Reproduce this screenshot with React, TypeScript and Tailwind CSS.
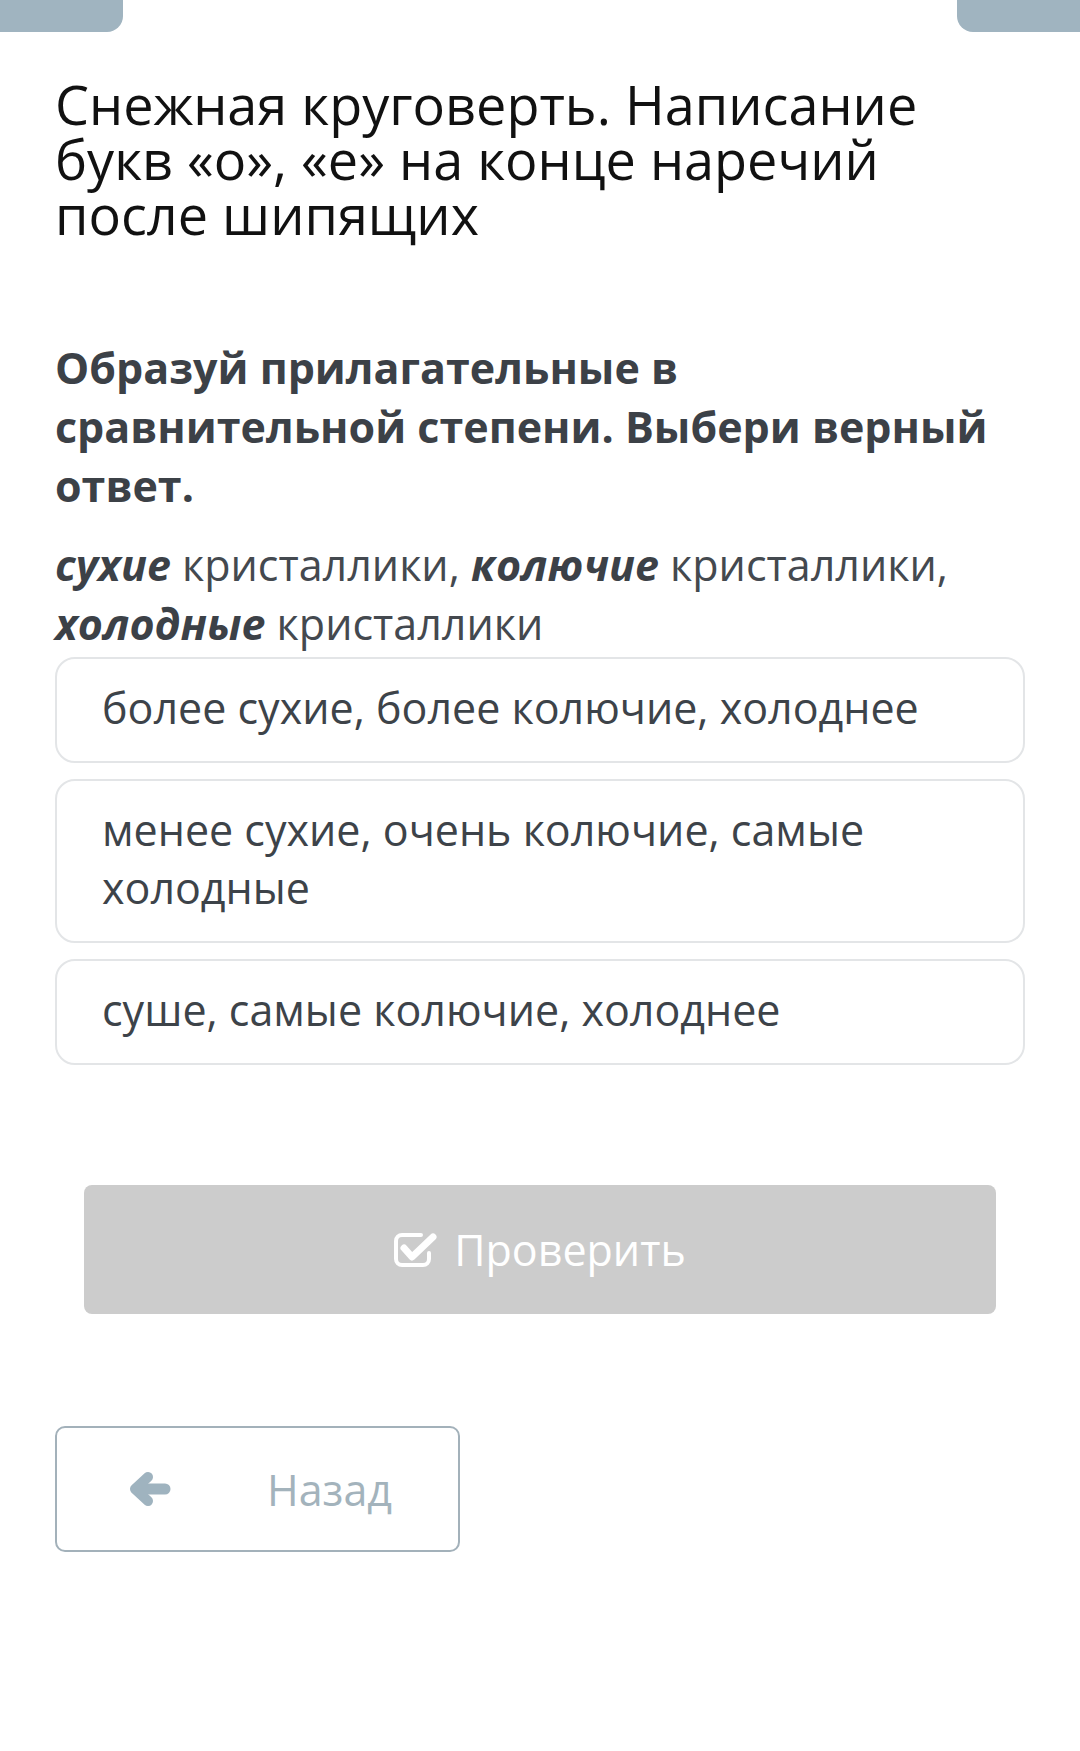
import React from "react";

function ArrowLeft() {
  return (
    <svg width="42" height="36" viewBox="0 0 42 36" fill="none">
      <polyline points="19,6 6,18 19,30" stroke="#9fb3bf" strokeWidth="10" strokeLinecap="round" strokeLinejoin="round" />
      <line x1="8" y1="18" x2="36" y2="18" stroke="#9fb3bf" strokeWidth="11" strokeLinecap="round" />
    </svg>
  );
}

function CheckSquare() {
  return (
    <svg width="44" height="36" viewBox="0 0 44 36" fill="none">
      <path d="M27 3 H8 a6 6 0 0 0 -6 6 V27 a6 6 0 0 0 6 6 H29 a6 6 0 0 0 6 -6 V21" stroke="#ffffff" strokeWidth="4" strokeLinecap="round" />
      <polyline points="10,16 18,25 39,5" stroke="#ffffff" strokeWidth="7" strokeLinecap="round" strokeLinejoin="round" />
    </svg>
  );
}

const options = [
  "более сухие, более колючие, холоднее",
  "менее сухие, очень колючие, самые холодные",
  "суше, самые колючие, холоднее",
];

export default function App() {
  return (
    <div className="min-h-[1751px] w-[1080px] bg-white font-['Open_Sans',sans-serif]">
      <div className="flex h-[32px] justify-between">
        <div className="h-[32px] w-[123px] rounded-br-[16px] bg-[#a0b4c0]" />
        <div className="h-[32px] w-[123px] rounded-bl-[16px] bg-[#a0b4c0]" />
      </div>

      <div className="px-[55px]">
        <h1 className="mt-[45px] text-[54px] font-normal leading-[55px] text-[#111111]">
          Снежная круговерть. Написание букв «о», «е» на конце наречий после шипящих
        </h1>

        <p className="mt-[96px] text-[43px] font-bold leading-[59px] text-[#3c4147]">
          Образуй прилагательные в сравнительной степени. Выбери верный ответ.
        </p>

        <p className="mt-[20px] text-[43px] leading-[59px] text-[#44494f]">
          <b className="font-bold italic text-[#3c4147]">сухие</b> кристаллики,{" "}
          <b className="font-bold italic text-[#3c4147]">колючие</b> кристаллики,{" "}
          <b className="font-bold italic text-[#3c4147]">холодные</b> кристаллики
        </p>

        <div className="mt-[4px] flex flex-col gap-[16px]">
          {options.map((o) => (
            <div
              key={o}
              className="rounded-[20px] border-2 border-[#e3e5e7] bg-white pb-[24px] pl-[45px] pr-[40px] pt-[20px] text-[43px] leading-[58px] text-[#3d4349]"
            >
              {o}
            </div>
          ))}
        </div>

        <div className="mx-[29px] mt-[120px] flex h-[129px] items-center justify-center gap-[16px] rounded-[8px] bg-[#cccccc]">
          <CheckSquare />
          <span className="text-[43px] leading-none text-white">Проверить</span>
        </div>

        <div className="mt-[112px] flex h-[126px] w-[405px] items-center rounded-[10px] border-2 border-[#a3b1ba] pl-[72px]">
          <ArrowLeft />
          <span className="ml-[96px] text-[43px] leading-none text-[#a3b3bc]">Назад</span>
        </div>
      </div>
    </div>
  );
}
